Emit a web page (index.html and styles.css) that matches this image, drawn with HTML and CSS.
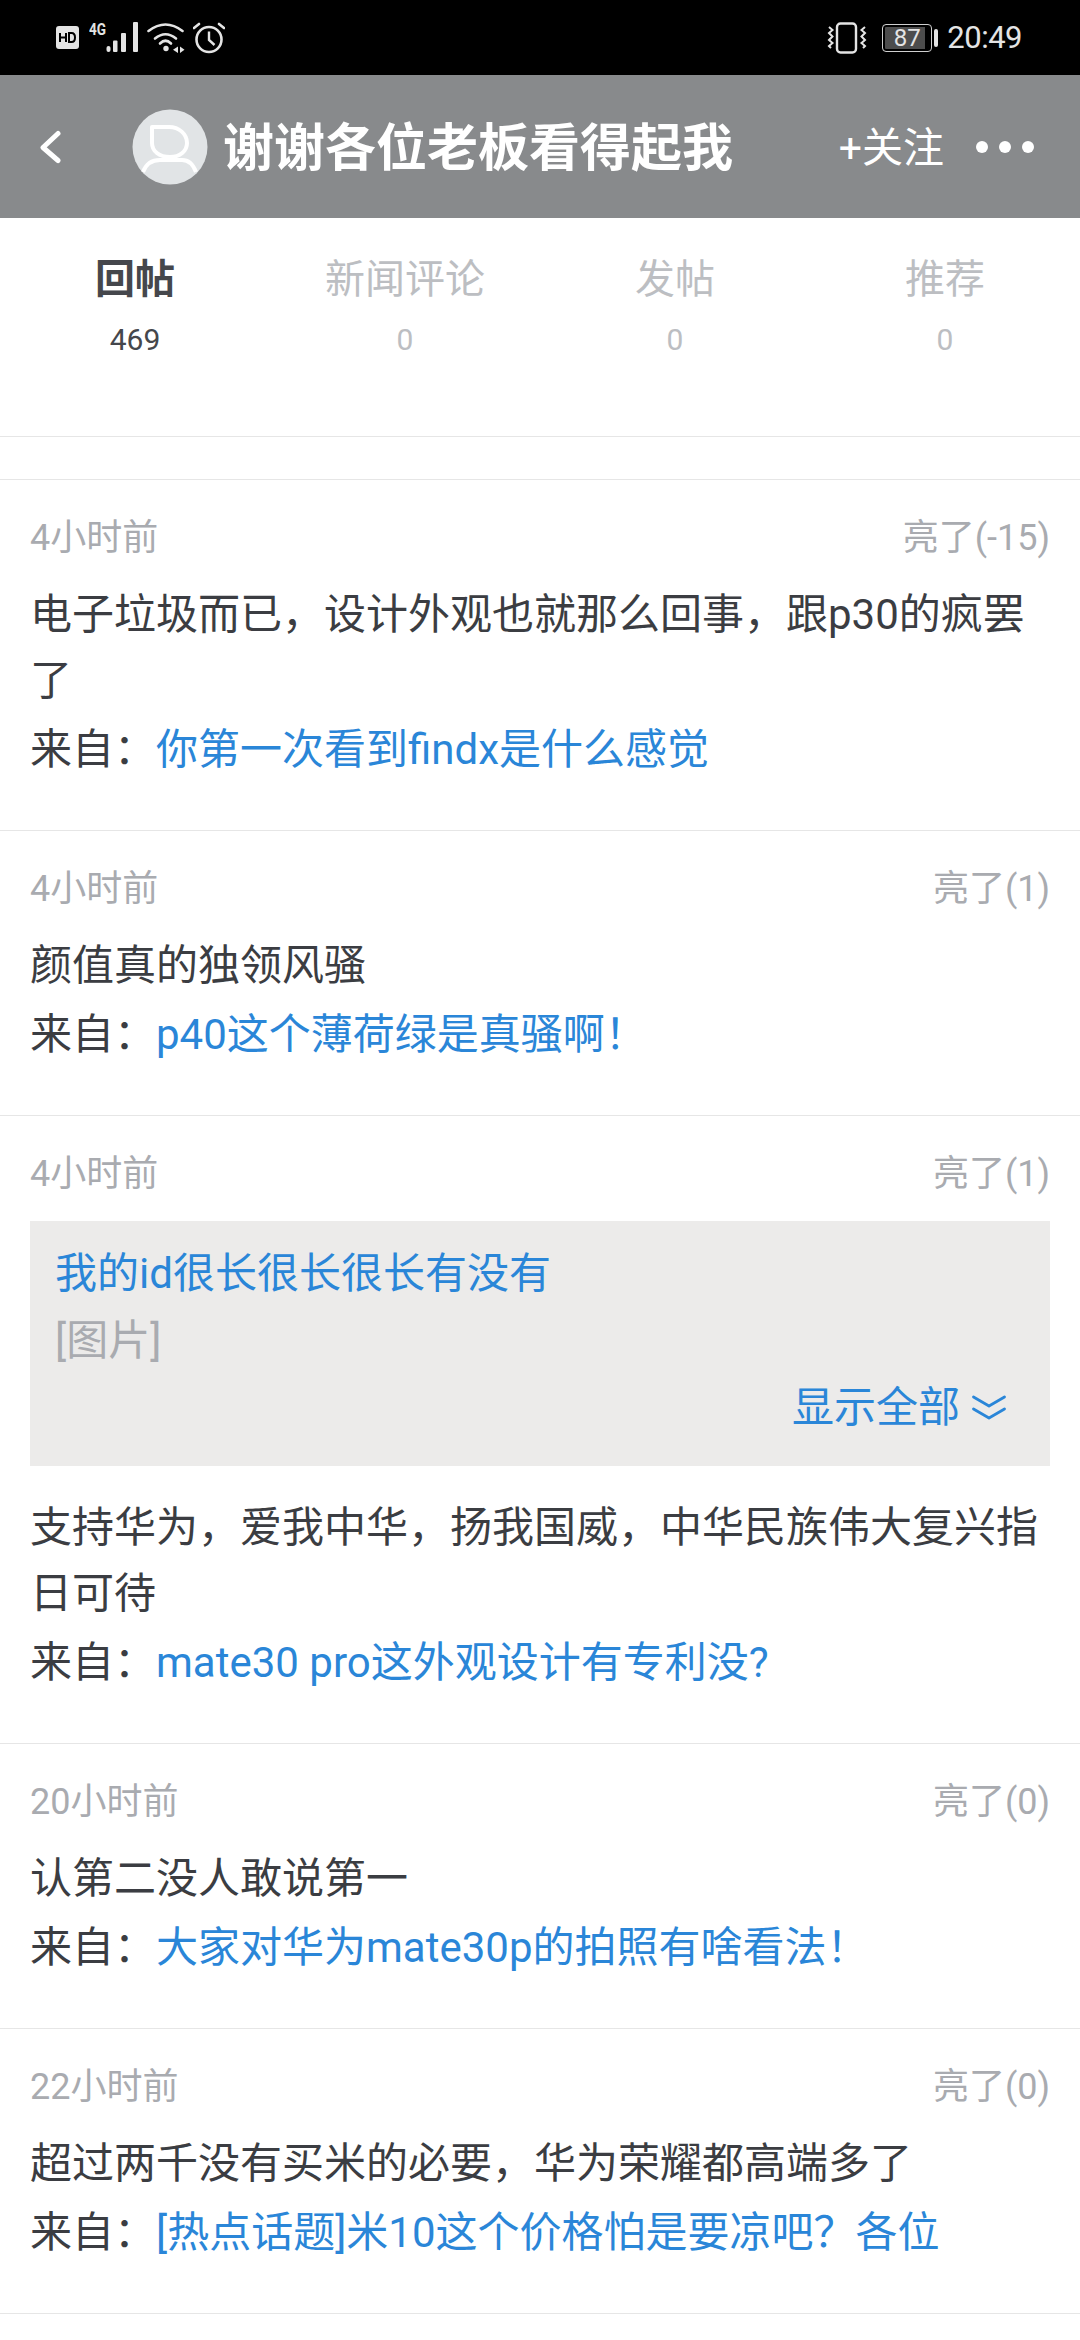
FILE: index.html
```html
<!DOCTYPE html>
<html lang="zh">
<head>
<meta charset="utf-8">
<title>回帖</title>
<link rel="stylesheet" href="styles.css">
</head>
<body>
<div class="status">
  <div class="status-left">
    <svg width="26" height="26" viewBox="0 0 26 26"><rect x="1" y="1" width="23" height="23" rx="3" fill="#e4e4e4"/><path d="M5 8v9M11 8v9M5 12.500h6M14 8v9h2.500c2.500 0 3.500-2 3.500-4.500S19 8 16.500 8z" fill="none" stroke="#000" stroke-width="2"/></svg>
    <svg width="50" height="44" viewBox="0 -6 50 44"><text x="0" y="13" textLength="17" lengthAdjust="spacingAndGlyphs" class="sig-text">4G</text><g fill="#e4e4e4"><rect x="17.500" y="24" width="4" height="6" rx="2"/><rect x="24" y="18.500" width="4.500" height="11.500" rx="1"/><rect x="32" y="11" width="5" height="19" rx="1"/><rect x="44" y="0" width="5" height="30" rx="1"/></g></svg>
    <svg width="38" height="32" viewBox="0 0 38 32"><g fill="none" stroke="#e4e4e4" stroke-width="2.600" stroke-linecap="round"><path d="M1.500 9Q18.500-4 35.500 9"/><path d="M8 16.500Q18.500 8 29 16.500"/><path d="M13 21.500Q18.500 16 24 21.500"/></g><circle cx="19" cy="26.500" r="2.700" fill="#e4e4e4"/><path d="M31 24.500l-5 3.200 5 3.200zM33 24.500v6.400l4.500-3.200z" fill="#e4e4e4"/></svg>
    <svg width="32" height="32" viewBox="0 0 32 32"><circle cx="16" cy="17.500" r="12.500" fill="none" stroke="#e4e4e4" stroke-width="2.600"/><path d="M16 9.500v8.500l5.500 5" fill="none" stroke="#e4e4e4" stroke-width="2.400"/><path d="M1 6l5-4M31 6l-5-4" stroke="#e4e4e4" stroke-width="2.600" stroke-linecap="round"/></svg>
  </div>
  <div class="status-right">
    <svg width="40" height="32" viewBox="0 0 40 32"><rect x="10" y="1.500" width="19" height="29" rx="3.500" fill="none" stroke="#e4e4e4" stroke-width="2.400"/><path d="M2 5l3.500 3-3.500 3 3.500 3.500-3.500 3.500 3.500 3-3.500 3 2 2M38 5l-3.500 3 3.500 3-3.500 3.500 3.500 3.500-3.500 3 3.500 3-2 2" fill="none" stroke="#e4e4e4" stroke-width="2"/></svg>
    <div class="battery">
      <div class="battery-body"><span class="battery-num">87</span></div>
      <div class="battery-cap"></div>
    </div>
    <span class="clock">20:49</span>
  </div>
</div>

<header class="header">
  <svg class="back" width="24" height="36" viewBox="0 0 24 36"><path d="M18 4.500L3 18.500l15 13" fill="none" stroke="#fff" stroke-width="5" stroke-linecap="round" stroke-linejoin="round"/></svg>
  <svg class="avatar" width="76" height="76" viewBox="0 0 76 76"><circle cx="38" cy="38" r="37.500" fill="#e1e4e6"/><path d="M20 18h17c10 0 18 7 18 16 0 8-7 14-17 14-11 0-18-6-18-14z" fill="none" stroke="#fff" stroke-width="4" stroke-linejoin="round"/><path d="M11 63c3-8 9-12 17-12h22c7 0 11 4 14 12" fill="none" stroke="#fff" stroke-width="4"/></svg>
  <h1 class="title">谢谢各位老板看得起我</h1>
  <span class="follow">+关注</span>
  <div class="more"><i></i><i></i><i></i></div>
</header>

<nav class="tabs">
  <div class="tab active"><div class="tab-name">回帖</div><div class="tab-num">469</div></div>
  <div class="tab"><div class="tab-name">新闻评论</div><div class="tab-num">0</div></div>
  <div class="tab"><div class="tab-name">发帖</div><div class="tab-num">0</div></div>
  <div class="tab"><div class="tab-name">推荐</div><div class="tab-num">0</div></div>
</nav>

<div class="gap"></div>

<article class="card">
  <div class="meta"><span>4小时前</span><span>亮了(-15)</span></div>
  <p class="body">电子垃圾而已，设计外观也就那么回事，跟p30的疯罢了</p>
  <p class="source">来自：<a>你第一次看到findx是什么感觉</a></p>
</article>
<article class="card">
  <div class="meta"><span>4小时前</span><span>亮了(1)</span></div>
  <p class="body">颜值真的独领风骚</p>
  <p class="source">来自：<a>p40这个薄荷绿是真骚啊！</a></p>
</article>
<article class="card">
  <div class="meta"><span>4小时前</span><span>亮了(1)</span></div>
  <div class="quote">
    <div class="quote-user">我的id很长很长很长有没有</div>
    <div class="quote-img">[图片]</div>
    <div class="quote-more">显示全部<svg width="34" height="28" viewBox="0 0 34 28"><path d="M1.500 3l15.500 9 15.500-9M1.500 15l15.500 9 15.500-9" fill="none" stroke="#2a86d8" stroke-width="2.800" stroke-linecap="round" stroke-linejoin="round"/></svg></div>
  </div>
  <p class="body">支持华为，爱我中华，扬我国威，中华民族伟大复兴指日可待</p>
  <p class="source">来自：<a>mate30 pro这外观设计有专利没?</a></p>
</article>
<article class="card">
  <div class="meta"><span>20小时前</span><span>亮了(0)</span></div>
  <p class="body">认第二没人敢说第一</p>
  <p class="source">来自：<a>大家对华为mate30p的拍照有啥看法！</a></p>
</article>
<article class="card">
  <div class="meta"><span>22小时前</span><span>亮了(0)</span></div>
  <p class="body">超过两千没有买米的必要，华为荣耀都高端多了</p>
  <p class="source">来自：<a>[热点话题]米10这个价格怕是要凉吧？各位</a></p>
</article>
</body>
</html>
```
FILE: styles.css
```css
* { box-sizing: border-box; }
html, body { margin: 0; padding: 0; }
body {
  width: 1080px;
  height: 2340px;
  overflow: hidden;
  background: #fff;
  font-family: Roboto, "Noto Sans CJK SC", sans-serif;
  color: #3b3d42;
}
.status {
  height: 75px;
  background: #000;
  display: flex;
  align-items: center;
  justify-content: space-between;
  padding: 0 58px 0 55px;
}
.status-left, .status-right { display: flex; align-items: center; }
.status-left { gap: 8px; }
.status-right { gap: 9px; }
.sig-text { font: 700 17px Roboto, sans-serif; fill: #e4e4e4; }
.battery { display: flex; align-items: center; gap: 2px; margin-left: 6px; }
.battery-body {
  width: 50px;
  height: 28px;
  border: 1.500px solid #cfcfcf;
  border-radius: 4px;
  background: linear-gradient(to right, #4d4d4d 87%, #000 87%);
  box-shadow: inset 0 0 0 2px #000;
  display: flex;
  align-items: center;
  justify-content: center;
}
.battery-num { font-size: 24px; color: #e4e4e4; line-height: 1; }
.battery-cap { width: 4px; height: 18px; background: #e4e4e4; border-radius: 2px; }
.clock { font-size: 31px; letter-spacing: -0.5px; color: #e4e4e4; }
.header {
  height: 143px;
  background: #888a8c;
  display: flex;
  align-items: center;
  color: #fff;
  padding: 0 30px 0 40px;
}
.back { flex: none; margin-right: 68px; }
.avatar { flex: none; margin-right: 15px; }
.title { margin: 4px 0 0; font-size: 51px; font-weight: 700; line-height: 1; flex: 1; white-space: nowrap; }
.follow { font-size: 41px; margin: 4px 32px 0 0; line-height: 1; }
.more { display: flex; gap: 11px; margin-right: 16px; }
.more i { width: 12px; height: 12px; background: #fff; border-radius: 50%; display: block; }
.tabs {
  height: 219px;
  display: flex;
  padding-top: 34px;
  border-bottom: 1px solid #e6e6e6;
}
.tab { width: 270px; text-align: center; color: #bcbec2; }
.tab-name { font-size: 40px; line-height: 56px; }
.tab-num { font-size: 30px; line-height: 40px; margin-top: 12px; }
.tab.active { color: #45474c; }
.tab.active .tab-name { font-weight: 700; }
.gap { height: 43px; border-bottom: 1px solid #e6e6e6; }
.card {
  padding: 33px 30px 47px;
  border-bottom: 1px solid #e6e6e6;
}
.meta {
  display: flex;
  justify-content: space-between;
  font-size: 36px;
  line-height: 50px;
  color: #a9abb0;
}
.body {
  margin: 19px 0 0;
  font-size: 42px;
  line-height: 66px;
  color: #3b3d42;
}
.source {
  margin: 2px 0 0;
  font-size: 42px;
  line-height: 67px;
  color: #3b3d42;
}
.source a { color: #2a86d8; }
.quote {
  margin-top: 22px;
  height: 245px;
  background: #ecebea;
  padding: 19px 25px 0;
  font-size: 42px;
  line-height: 67px;
}
.quote + .body { margin-top: 28.5px; }
.quote-user { color: #2a86d8; }
.quote-img { color: #a9abb0; }
.quote-more {
  color: #2a86d8;
  display: flex;
  align-items: center;
  justify-content: flex-end;
  gap: 12px;
  padding-right: 19px;
}
```
